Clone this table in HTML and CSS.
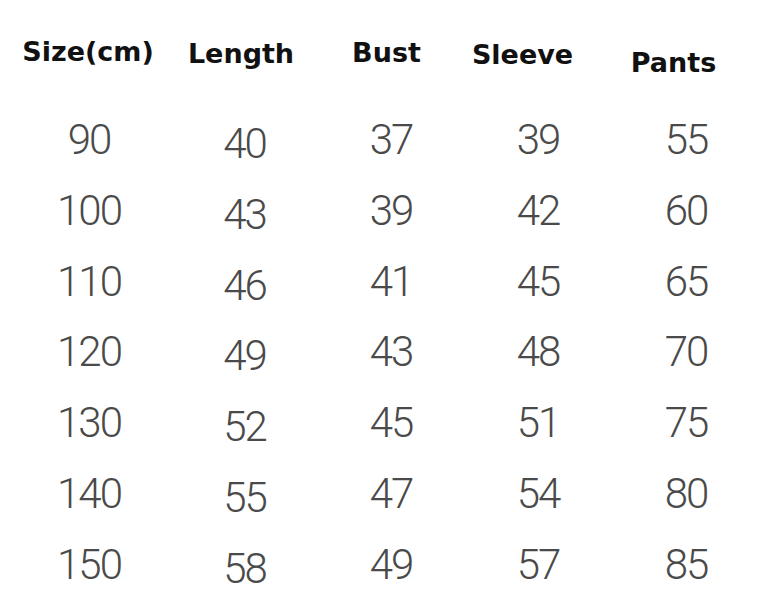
FILE: index.html
```html
<!DOCTYPE html>
<html lang="en">
<head>
<meta charset="utf-8">
<title>Size chart</title>
<link rel="stylesheet" href="styles.css">
</head>
<body>
<div class="chart">
  <div class="h h-size">Size(cm)</div>
  <div class="h h-len">Length</div>
  <div class="h h-bust">Bust</div>
  <div class="h h-sleeve">Sleeve</div>
  <div class="h h-pants">Pants</div>

  <div class="v">90</div><div class="v v-len">40</div><div class="v">37</div><div class="v">39</div><div class="v">55</div>
  <div class="v">100</div><div class="v v-len">43</div><div class="v">39</div><div class="v">42</div><div class="v">60</div>
  <div class="v">110</div><div class="v v-len">46</div><div class="v">41</div><div class="v">45</div><div class="v">65</div>
  <div class="v">120</div><div class="v v-len">49</div><div class="v">43</div><div class="v">48</div><div class="v">70</div>
  <div class="v">130</div><div class="v v-len">52</div><div class="v">45</div><div class="v">51</div><div class="v">75</div>
  <div class="v">140</div><div class="v v-len">55</div><div class="v">47</div><div class="v">54</div><div class="v">80</div>
  <div class="v">150</div><div class="v v-len">58</div><div class="v">49</div><div class="v">57</div><div class="v">85</div>
</div>
</body>
</html>
```

FILE: styles.css
```css
html, body {
  margin: 0;
  padding: 0;
  background: #ffffff;
}

.chart {
  display: grid;
  grid-template-columns: 154px 152px 146px 148px 148px;
  grid-template-rows: 105px repeat(7, 70.75px);
  margin-left: 11px;
  width: 748px;
}

.h {
  font-family: "Comic Sans MS", "DejaVu Sans", sans-serif;
  font-weight: bold;
  font-size: 27px;
  line-height: 27px;
  color: #111111;
  text-align: center;
  white-space: nowrap;
}

.h-size { padding-top: 38px; }
.h-len { padding-top: 40px; }
.h-bust { padding-top: 39px; padding-right: 7px; }
.h-sleeve { padding-top: 41px; padding-right: 29px; }
.h-pants { padding-top: 49px; padding-right: 23px; }

.v {
  font-family: Roboto, "Open Sans", sans-serif;
  font-weight: 300;
  font-size: 42px;
  line-height: 70.75px;
  letter-spacing: -2px;
  padding-left: 2px;
  color: #4a4a4a;
  text-align: center;
}

.v-len {
  padding-top: 4px;
  padding-left: 7px;
}
```
